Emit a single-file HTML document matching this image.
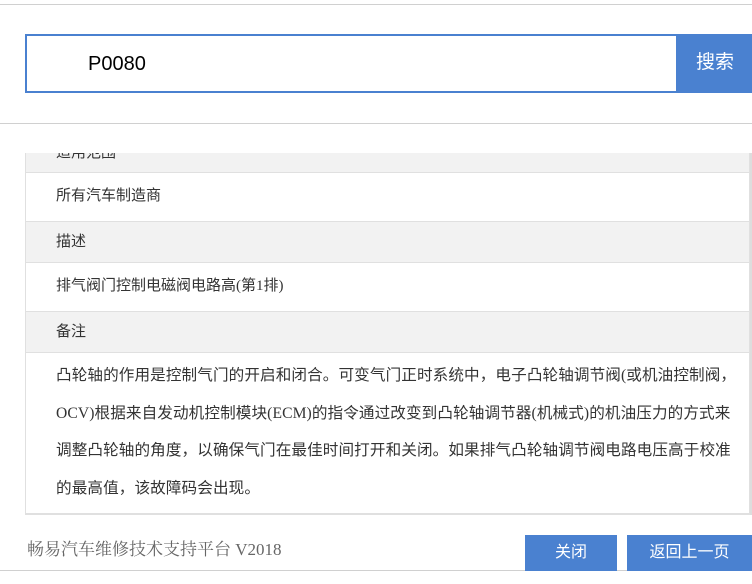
<!DOCTYPE html>
<html><head><meta charset="utf-8"><style>
body{margin:0;width:752px;height:584px;overflow:hidden;background:#fff;font-family:"Liberation Serif","Noto Sans CJK SC",sans-serif;position:relative}
.a{position:absolute}
.row{position:absolute;left:26px;width:723px;box-sizing:border-box;padding-left:30px;font-size:15px;color:#333}
.g{background:#f2f2f2;border-top:1px solid #e0e0e0;border-bottom:1px solid #e0e0e0}
</style></head><body>
<div class="a" style="left:0;top:4px;width:752px;height:1px;background:#d0d0d0"></div>
<div class="a" style="left:25px;top:34px;width:653px;height:59px;box-sizing:border-box;border:2px solid #4a81d0"></div>
<div class="a" style="left:88px;top:53px;font-size:20px;color:#000;font-family:'Liberation Sans',sans-serif">P0080</div>
<div class="a" style="left:678px;top:34px;width:74px;height:59px;background:#4a81d0;color:#fff;font-size:19px;line-height:57px;text-align:center">搜索</div>
<div class="a" style="left:0;top:123px;width:752px;height:1px;background:#d0d0d0"></div>
<div class="a" style="left:25px;top:153px;width:725px;height:362px;border-left:1px solid #e0e0e0;border-right:1px solid #e0e0e0;border-bottom:2px solid #e0e0e0;box-sizing:border-box"></div>
<div class="a" style="left:750px;top:153px;width:2px;height:362px;background:#ddd"></div>
<div class="row g" style="top:153px;height:20px;border-top:none;overflow:hidden"><div style="margin-top:-12px">适用范围</div></div>
<div class="row" style="top:173px;height:48px;line-height:46px">所有汽车制造商</div>
<div class="row g" style="top:221px;height:42px;line-height:40px">描述</div>
<div class="row" style="top:263px;height:48px;line-height:46px">排气阀门控制电磁阀电路高(第1排)</div>
<div class="row g" style="top:311px;height:42px;line-height:40px">备注</div>
<div class="row" style="top:357px;line-height:37.5px;padding-right:0;white-space:nowrap;font-size:15.6px;letter-spacing:0.1px">凸轮轴的作用是控制气门的开启和闭合。可变气门正时系统中，电子凸轮轴调节阀(或机油控制阀，<br>OCV)根据来自发动机控制模块(ECM)的指令通过改变到凸轮轴调节器(机械式)的机油压力的方式来<br>调整凸轮轴的角度，以确保气门在最佳时间打开和关闭。如果排气凸轮轴调节阀电路电压高于校准<br>的最高值，该故障码会出现。</div>
<div class="a" style="left:27px;top:535px;font-size:17px;color:#666;font-family:'Liberation Serif','Noto Serif CJK SC',serif">畅易汽车维修技术支持平台 V2018</div>
<div class="a" style="left:0;top:570px;width:752px;height:1px;background:#d0d0d0"></div>
<div class="a" style="left:525px;top:535px;width:92px;height:36px;background:#4a81d0;color:#fff;font-size:16px;line-height:36px;text-align:center">关闭</div>
<div class="a" style="left:627px;top:535px;width:125px;height:36px;background:#4a81d0;color:#fff;font-size:16px;line-height:36px;text-align:center">返回上一页</div>
</body></html>
